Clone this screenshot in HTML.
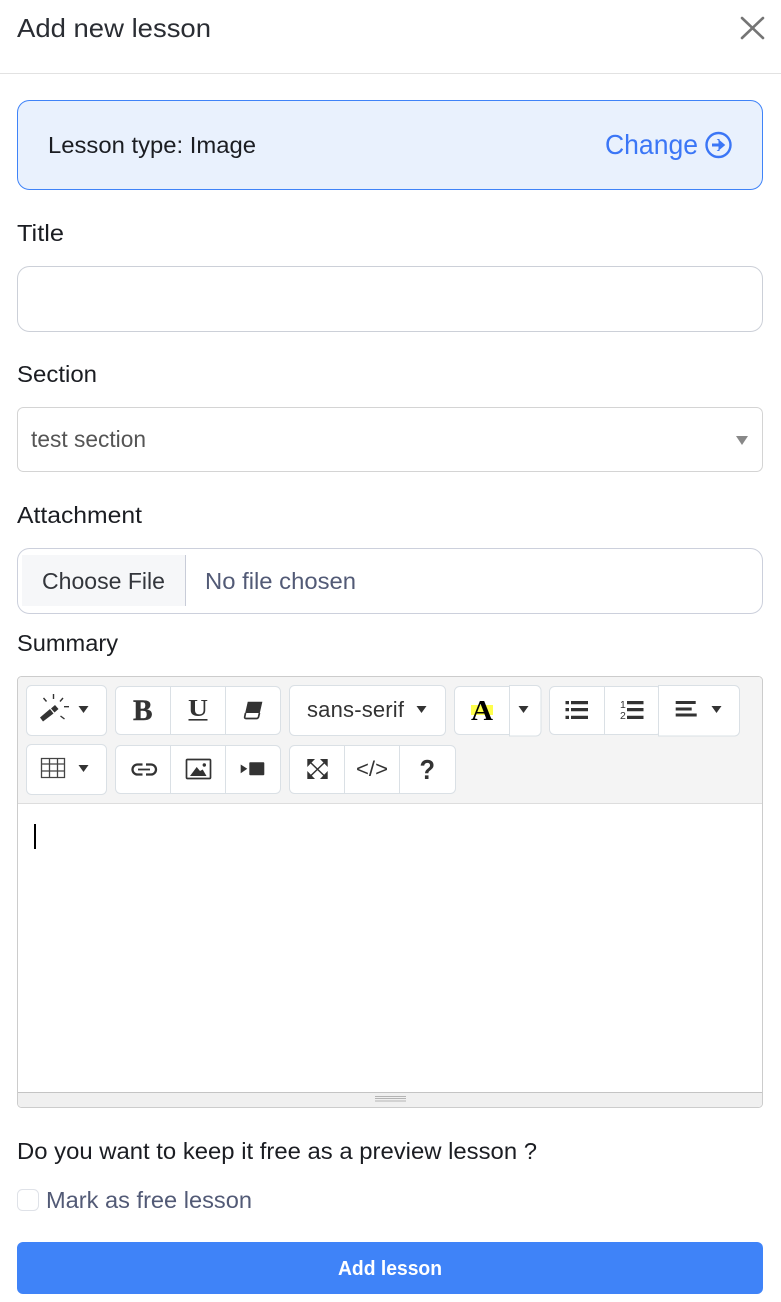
<!DOCTYPE html>
<html lang="en">
<head>
<meta charset="utf-8">
<title>Add new lesson</title>
<style>
html,body{margin:0;padding:0;background:#fff;width:781px;height:1302px;overflow:hidden}
svg{display:block}
text{font-family:"Liberation Sans",sans-serif}
.lb{font-size:23px;fill:#1b1d22}
.ic{fill:#333}
.bd{fill:none;stroke:#dae0e5;stroke-width:1}
.bw{fill:#fff;stroke:#dae0e5;stroke-width:1}
</style>
</head>
<body>
<svg width="781" height="1302" viewBox="0 0 781 1302" xmlns="http://www.w3.org/2000/svg">
<rect width="781" height="1302" fill="#fff"/>
<text x="17" y="37" font-size="26" fill="#2a2d33" textLength="194" lengthAdjust="spacingAndGlyphs">Add new lesson</text>
<path d="M742 18L763 38M763 18L742 38" stroke="#757575" stroke-width="2.6" stroke-linecap="round" fill="none"/>
<rect x="0" y="73" width="781" height="1" fill="#e2e2e2"/>

<rect x="17.5" y="100.5" width="745" height="89" rx="12" fill="#e9f1fd" stroke="#3f83f8"/>
<text x="48" y="153" class="lb" textLength="208" lengthAdjust="spacingAndGlyphs">Lesson type: Image</text>
<text x="605" y="154" font-size="27.5" fill="#3b76f6" textLength="93" lengthAdjust="spacingAndGlyphs">Change</text>
<circle cx="718.5" cy="145" r="12" fill="none" stroke="#3b76f6" stroke-width="2.4"/>
<path d="M712 145H722" stroke="#3b76f6" stroke-width="3" fill="none"/>
<path d="M719 139.5H718L724.5 145L718 150.500H719Z" fill="#3b76f6" stroke="#3b76f6" stroke-width="1"/>

<text x="17" y="241" class="lb" textLength="47" lengthAdjust="spacingAndGlyphs">Title</text>
<rect x="17.5" y="266.5" width="745" height="65" rx="12" fill="#fff" stroke="#ccd0d8"/>

<text x="17" y="382" class="lb" textLength="80" lengthAdjust="spacingAndGlyphs">Section</text>
<rect x="17.5" y="407.5" width="745" height="64" rx="6" fill="#fff" stroke="#d4d4d4"/>
<text x="31" y="447" font-size="23" fill="#555" textLength="115" lengthAdjust="spacingAndGlyphs">test section</text>
<path d="M736 436H748L742 445Z" fill="#888"/>

<text x="17" y="523" class="lb" textLength="125" lengthAdjust="spacingAndGlyphs">Attachment</text>
<rect x="17.5" y="548.5" width="745" height="65" rx="12" fill="#fff" stroke="#ccd0dc"/>
<rect x="22" y="555" width="163" height="51" fill="#f6f7f9"/>
<rect x="185" y="555" width="1" height="51" fill="#c8ccd8"/>
<text x="42" y="589" font-size="23" fill="#33363c" textLength="123" lengthAdjust="spacingAndGlyphs">Choose File</text>
<text x="205" y="589" font-size="23" fill="#525a76" textLength="151" lengthAdjust="spacingAndGlyphs">No file chosen</text>

<text x="17" y="651" class="lb" textLength="101" lengthAdjust="spacingAndGlyphs">Summary</text>

<!-- editor -->
<rect x="17.5" y="676.5" width="745" height="431" rx="4" fill="#fff" stroke="#ccc"/>
<path d="M18 803V681a4 4 0 0 1 4-4H758a4 4 0 0 1 4 4V803Z" fill="#f4f4f4"/>
<rect x="18" y="803" width="744" height="1" fill="#ddd"/>
<path d="M18 1093H762V1103a4 4 0 0 1-4 4H22a4 4 0 0 1-4-4Z" fill="#f0f0f0"/>
<rect x="18" y="1092" width="744" height="1" fill="#c4c4c4"/>
<path d="M375 1096.5H406M375 1098.5H406M375 1101H406" stroke="#b4b4b4" stroke-width="1" fill="none"/>
<rect x="34" y="824" width="2" height="25" fill="#000"/>

<!-- row 1 buttons -->
<rect x="26.5" y="685.5" width="80" height="50" rx="5" class="bw"/>
<rect x="115.5" y="686.5" width="165" height="48" rx="5" class="bw"/>
<path d="M170.5 687V734M225.5 687V734" class="bd"/>
<rect x="289.5" y="685.5" width="156" height="50" rx="5" class="bw"/>
<rect x="454.5" y="686.500" width="60" height="48" rx="5" class="bw"/>
<path d="M515 685.5H536a5 5 0 0 1 5 5V731a5 5 0 0 1-5 5H509.5V685.5Z" class="bw"/>
<rect x="549.5" y="686.5" width="112" height="48" rx="5" class="bw"/>
<path d="M604.5 687V734" class="bd"/>
<path d="M658.5 685.5H734.5a5 5 0 0 1 5 5V731a5 5 0 0 1-5 5H658.5Z" class="bw"/>

<!-- row 2 buttons -->
<rect x="26.5" y="744.5" width="80" height="50" rx="5" class="bw"/>
<rect x="115.5" y="745.5" width="165" height="48" rx="5" class="bw"/>
<path d="M170.5 746V793M225.5 746V793" class="bd"/>
<rect x="289.5" y="745.5" width="166" height="48" rx="5" class="bw"/>
<path d="M344.5 746V793M399.5 746V793" class="bd"/>

<!-- wand -->
<path d="M40 717.500L50 709L53.500 713.500L43 721.500Z" fill="#333"/>
<path d="M51 708.500L55 705L58.500 709L54.500 712.500Z" fill="#333"/>
<path d="M53.500 694V699M43.500 698L46.500 701.500M63 698L60 701.500M64 706.700H69M60.500 716L64.500 719" stroke="#333" stroke-width="1.400" fill="none"/>
<path d="M78.500 706H88.500L83.500 713Z" class="ic"/>

<!-- B U eraser -->
<text x="133" y="720" font-size="30" font-weight="700" fill="#333" stroke="#333" stroke-width="0.400" textLength="19.500" lengthAdjust="spacingAndGlyphs" style="font-family:'Liberation Serif',serif">B</text>
<text x="188" y="716" font-size="24" font-weight="700" fill="#333" textLength="20" lengthAdjust="spacingAndGlyphs" style="font-family:'Liberation Serif',serif">U</text>
<rect x="188.500" y="719" width="19" height="1.600" fill="#333"/>
<path d="M248 702H262L259.500 713H245.500Z" fill="#333" stroke="#333" stroke-width="0.600"/>
<path d="M245.500 713L244.700 717Q244.500 718.500 246 718.500H256.500Q258 718.500 258.500 717L259.500 713" fill="#fff" stroke="#333" stroke-width="1.700"/>

<!-- font -->
<text x="307" y="717" font-size="22" fill="#333" textLength="97" lengthAdjust="spacing">sans-serif</text>
<path d="M416.500 706H426.500L421.500 713Z" class="ic"/>

<!-- color -->
<rect x="471" y="705" width="22" height="10" fill="#ffff4d"/>
<text x="471" y="720" font-size="29" font-weight="700" fill="#000" textLength="22" lengthAdjust="spacingAndGlyphs" style="font-family:'Liberation Serif',serif">A</text>
<path d="M518.500 706H528.500L523.500 713Z" class="ic"/>

<!-- ul -->
<path d="M565.500 701H569V704.300H565.500ZM565.500 708H569V711.300H565.500ZM565.500 715.700H569V719H565.500Z" fill="#333"/>
<path d="M571 701H588V704.300H571ZM571 708H588V711.300H571ZM571 715.700H588V719H571Z" fill="#333"/>
<!-- ol -->
<text x="620" y="708" font-size="10.500" fill="#333">1</text>
<text x="620" y="719" font-size="10.500" fill="#333">2</text>
<path d="M627 701H643.500V704.300H627ZM627 708H643.500V711.300H627ZM627 715.700H643.500V719H627Z" fill="#333"/>
<!-- align -->
<path d="M675.700 701H695.700V704H675.700ZM675.700 707.500H691.700V710.500H675.700ZM675.700 713.500H696.700V716.500H675.700Z" fill="#333"/>
<path d="M711.500 706H721.500L716.500 713Z" class="ic"/>

<!-- table -->
<path d="M41.500 758.500H64.500V777.500H41.500ZM41.500 764H64.500M41.500 771H64.500M49.500 758.500V777.500M57.500 758.500V777.500" fill="none" stroke="#444" stroke-width="1.300"/>
<path d="M78.500 765H88.500L83.500 772Z" class="ic"/>

<!-- link -->
<path d="M142.500 764.500H137.500a5 5 0 0 0 0 10H142.500M146 764.500H151a5 5 0 0 1 0 10H146" fill="none" stroke="#333" stroke-width="2.300"/>
<rect x="138" y="768.600" width="12" height="1.800" fill="#333"/>

<!-- image -->
<rect x="186.500" y="759.500" width="24" height="19" rx="1" fill="none" stroke="#333" stroke-width="1.700"/>
<path d="M190 776L196.700 767L200 771L202.700 769.500L206.500 776Z" fill="#333"/>
<circle cx="204.300" cy="765" r="1.700" fill="#333"/>

<!-- video -->
<rect x="249.300" y="762.300" width="15" height="13" rx="1" fill="#333"/>
<path d="M240.700 764.500L247.300 768.800L240.700 773.300Z" fill="#333"/>

<!-- fullscreen -->
<path d="M311 763L324 775.500M324 763L311 775.500" stroke="#333" stroke-width="1.500" fill="none"/>
<path d="M307.300 759H315L307.300 767ZM327.700 759H320L327.700 767ZM307.300 779H315L307.300 771ZM327.700 779H320L327.700 771Z" fill="#333"/>

<!-- code -->
<text x="356" y="776" font-size="21" fill="#333" textLength="32" lengthAdjust="spacingAndGlyphs">&lt;/&gt;</text>

<!-- help -->
<text x="419.500" y="779" font-size="28" font-weight="700" fill="#333" textLength="15.500" lengthAdjust="spacingAndGlyphs">?</text>

<!-- bottom -->
<text x="17" y="1159" class="lb" textLength="520" lengthAdjust="spacingAndGlyphs">Do you want to keep it free as a preview lesson ?</text>
<rect x="17.500" y="1189.500" width="21" height="21" rx="5" fill="#fff" stroke="#dfe2e8"/>
<text x="46" y="1208" font-size="23" fill="#525a76" textLength="206" lengthAdjust="spacingAndGlyphs">Mark as free lesson</text>
<rect x="17" y="1242" width="746" height="52" rx="6" fill="#3f83f8"/>
<text x="338" y="1275" font-size="20" font-weight="700" fill="#fff" textLength="104" lengthAdjust="spacingAndGlyphs">Add lesson</text>
</svg>
</body>
</html>
